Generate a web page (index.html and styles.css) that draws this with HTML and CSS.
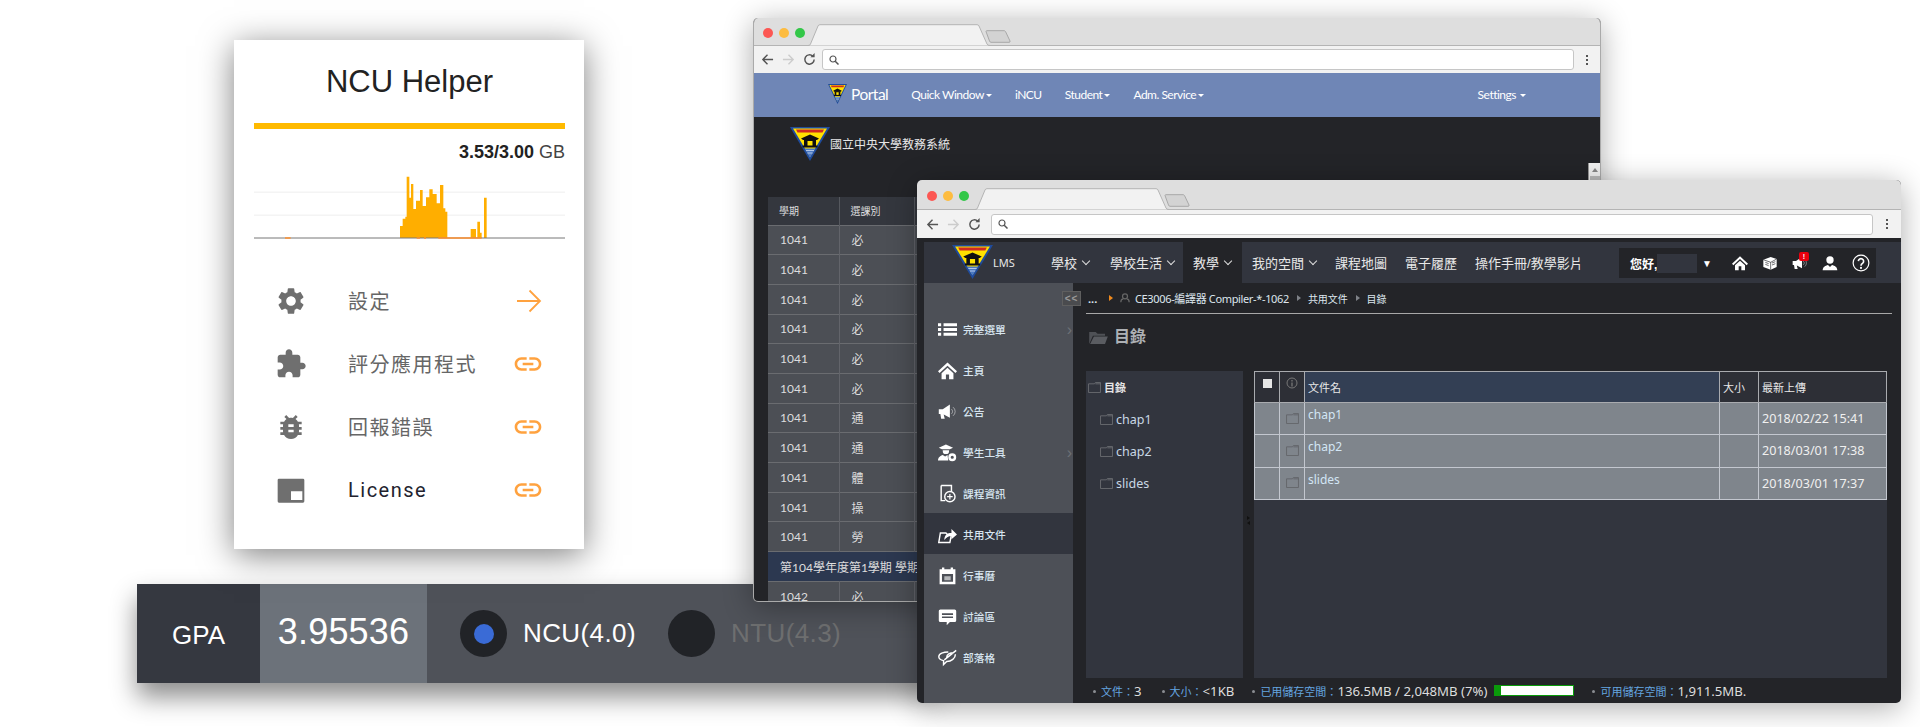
FILE: index.html
```html
<!DOCTYPE html>
<html lang="zh-Hant">
<head>
<meta charset="utf-8">
<title>NCU Helper</title>
<link rel="stylesheet" href="styles.css">
</head>
<body>
<svg class="defs" width="0" height="0" aria-hidden="true">
  <symbol id="ncu" viewBox="0 0 40 34" preserveAspectRatio="none">
    <polygon points="0,0 40,0 20,34" fill="#1f4b9c"/>
    <polygon points="3,1.500 37,1.500 20,30" fill="#ffe100"/>
    <polygon points="6,2.500 34,2.500 32.500,5.500 7.500,5.500" fill="#d02a22"/>
    <path d="M11 11.500 20 7.500 29 11.500 27 13H13Z" fill="#111"/>
    <path fill-rule="evenodd" d="M14 12.500h12V19h-12ZM17.500 14v5h5v-5Z" fill="#111"/>
    <rect x="12.500" y="18.500" width="15" height="2" fill="#111"/>
    <polygon points="14.500,21.500 25.500,21.500 20,30.500" fill="#4a78c4"/>
    <path d="M16 23.500h8M17.500 26h5" stroke="#dfe8f5" stroke-width=".7"/>
  </symbol>
  <symbol id="i-back" viewBox="0 0 14 14"><path d="M13 7H2M7 2 2 7l5 5" fill="none" stroke="currentColor" stroke-width="1.500"/></symbol>
  <symbol id="i-fwd" viewBox="0 0 14 14"><path d="M1 7h11M7 2l5 5-5 5" fill="none" stroke="currentColor" stroke-width="1.500"/></symbol>
  <symbol id="i-reload" viewBox="0 0 14 14"><path d="M12 7a5 5 0 1 1-1.500-3.600" fill="none" stroke="currentColor" stroke-width="1.600"/><path d="M8 4.500h4.500V0Z" fill="currentColor"/></symbol>
  <symbol id="i-search" viewBox="0 0 10 10"><circle cx="4" cy="4" r="3" fill="none" stroke="currentColor" stroke-width="1.200"/><path d="M6.200 6.200 9.500 9.500" stroke="currentColor" stroke-width="1.500"/></symbol>
  <symbol id="i-link" viewBox="0 0 24 24"><path d="M3.900 12c0-1.710 1.390-3.100 3.100-3.100h4V7H7c-2.760 0-5 2.240-5 5s2.240 5 5 5h4v-1.900H7c-1.710 0-3.100-1.390-3.100-3.100zM8 13h8v-2H8v2zm9-6h-4v1.900h4c1.710 0 3.100 1.390 3.100 3.100s-1.390 3.100-3.100 3.100h-4V17h4c2.760 0 5-2.240 5-5s-2.240-5-5-5z"/></symbol>
  <symbol id="i-folder" viewBox="0 0 14 12"><path d="M.5 11.500V2H7L8 .5h5.500v11Z M8 2h5.500" fill="none" stroke="currentColor"/></symbol>
  <symbol id="i-home" viewBox="0 0 24 24"><path d="M12 2 0 13l2 2.200L12 6l10 9.200 2-2.200Z M4.500 15.500V23H10v-6h4v6h5.500v-7.500L12 8.500Z"/></symbol>
  <symbol id="i-mega" viewBox="0 0 24 24"><path d="M1 9h5l9-6v17l-9-5H7l1.500 6H4l-1-6H1Z"/><path d="M17 9a4 4 0 0 1 0 6M19 6.500a7 7 0 0 1 0 11" fill="none" stroke="currentColor" stroke-opacity=".6"/></symbol>
</svg>

<section class="gpa">
  <div class="gpa-label">GPA</div>
  <div class="gpa-value">3.95536</div>
  <div class="gpa-opt"><span class="radio radio-on"></span><span>NCU(4.0)</span></div>
  <div class="gpa-opt gpa-off"><span class="radio"></span><span>NTU(4.3)</span></div>
</section>

<section class="card">
  <h1 class="card-title">NCU Helper</h1>
  <div class="quota-bar"></div>
  <div class="quota-text"><b>3.53/3.00</b> GB</div>
  <svg class="chart" viewBox="102 420 933 210" width="311" height="70">
    <path d="M102 486.500H1035M102 555.500H1035" stroke="#eee" stroke-width="3" fill="none"/>
    <path fill="#ffae00" d="M540 624V588h8v-22h8v58ZM556 624V560h4V440h8v63h5v-41h7v75h8v-25h12v-32h8v48h10v-26h10v-24h10v14h12v28h10v-55h10v70h6v10h6v79ZM752 624V597h16v27ZM772 624V575h8v33h5v16ZM792 624V503h8v121Z"/>
    <path d="M102 624H1035" stroke="#777" stroke-width="3"/>
    <path d="M195 624h17M590 624h10M612 624h6M655 624h130" stroke="#ff9130" stroke-width="4"/>
  </svg>
  <ul class="menu">
    <li class="menu-row">
      <svg class="mi" viewBox="0 0 24 24"><path d="M19.140 12.940c.040-.300.060-.610.060-.940 0-.320-.020-.640-.070-.940l2.030-1.580c.180-.140.230-.410.120-.610l-1.920-3.320c-.120-.220-.370-.290-.590-.220l-2.390.960c-.500-.380-1.030-.700-1.620-.940l-.360-2.540c-.040-.240-.240-.410-.480-.410h-3.840c-.240 0-.430.170-.470.410l-.360 2.540c-.590.240-1.130.570-1.620.940l-2.390-.960c-.220-.080-.470 0-.590.220L2.740 8.870c-.120.210-.080.470.120.610l2.030 1.580c-.050.300-.090.630-.090.940s.020.640.070.940l-2.030 1.580c-.180.140-.230.410-.120.610l1.920 3.320c.120.220.370.290.590.220l2.390-.960c.500.380 1.030.700 1.620.940l.360 2.540c.050.240.240.410.480.410h3.840c.240 0 .440-.170.470-.410l.360-2.540c.590-.240 1.130-.560 1.620-.940l2.390.960c.220.080.470 0 .590-.220l1.920-3.320c.120-.220.070-.470-.120-.610l-2.010-1.580zM12 15.600c-1.980 0-3.600-1.620-3.600-3.600s1.620-3.600 3.600-3.600 3.600 1.620 3.600 3.600-1.620 3.600-3.600 3.600z"/></svg>
      <span class="menu-text">設定</span>
      <svg class="ml" viewBox="0 0 32 32"><path d="M5 16H27M17.500 5.500 28 16 17.500 26.500" fill="none" stroke="currentColor" stroke-width="1.800"/></svg>
    </li>
    <li class="menu-row">
      <svg class="mi" viewBox="0 0 24 24"><path d="M20.500 11H19V7c0-1.100-.900-2-2-2h-4V3.500C13 2.120 11.880 1 10.500 1S8 2.120 8 3.500V5H4c-1.100 0-1.990.900-1.990 2v3.800H3.500c1.490 0 2.700 1.210 2.700 2.700s-1.210 2.700-2.700 2.700H2V20c0 1.100.900 2 2 2h3.800v-1.500c0-1.490 1.210-2.700 2.700-2.700 1.490 0 2.700 1.210 2.700 2.700V22H17c1.100 0 2-.900 2-2v-4h1.500c1.380 0 2.500-1.120 2.500-2.500S21.880 11 20.500 11z"/></svg>
      <span class="menu-text">評分應用程式</span>
      <svg class="ml"><use href="#i-link"/></svg>
    </li>
    <li class="menu-row">
      <svg class="mi" viewBox="0 0 24 24"><path d="M20 8h-2.810c-.450-.780-1.070-1.450-1.820-1.960L17 4.410 15.590 3l-2.170 2.170C12.960 5.060 12.490 5 12 5c-.490 0-.960.060-1.410.170L8.410 3 7 4.410l1.620 1.630C7.880 6.550 7.260 7.220 6.810 8H4v2h2.090c-.050.330-.090.660-.090 1v1H4v2h2v1c0 .340.040.670.090 1H4v2h2.810c1.040 1.790 2.970 3 5.190 3s4.150-1.210 5.190-3H20v-2h-2.090c.050-.330.090-.660.090-1v-1h2v-2h-2v-1c0-.340-.040-.670-.090-1H20V8zm-6 8h-4v-2h4v2zm0-4h-4v-2h4v2z"/></svg>
      <span class="menu-text">回報錯誤</span>
      <svg class="ml"><use href="#i-link"/></svg>
    </li>
    <li class="menu-row">
      <svg class="mi" viewBox="0 0 24 24"><path fill-rule="evenodd" d="M2 4.500A1 1 0 0 1 3 3.500H21A1 1 0 0 1 22 4.500V20.500A1 1 0 0 1 21 21.500H3A1 1 0 0 1 2 20.500ZM12 13V19.500H20.500V13Z"/></svg>
      <span class="menu-text menu-dark">License</span>
      <svg class="ml"><use href="#i-link"/></svg>
    </li>
  </ul>
</section>

<section class="window win-a">
  <div class="tabs">
    <div class="lights"><i class="red"></i><i class="amber"></i><i class="green"></i></div>
    <svg class="tab" viewBox="0 0 185 22" width="185" height="22"><path d="M0 21.500H3Q5 21.500 5.500 20L13 2Q13.500 .700 15 .700H172Q173.500 .700 174 2L182 20Q182.500 21.500 185 21.500" fill="#f2f2f2" stroke="#b4b4b4"/></svg>
    <svg class="tab-new" viewBox="0 0 26 13" width="26" height="13"><path d="M1 1.500Q1 .700 2 .700H19Q20 .700 20.500 1.500L25 11Q25.500 12.300 24 12.300H6Q5 12.300 4.500 11Z" fill="#d3d3d3" stroke="#a8a8a8"/></svg>
  </div>
  <div class="toolbar">
    <svg class="tb-i"><use href="#i-back"/></svg>
    <svg class="tb-i tb-dim"><use href="#i-fwd"/></svg>
    <svg class="tb-i"><use href="#i-reload"/></svg>
    <div class="urlbar"><svg class="tb-s"><use href="#i-search"/></svg></div>
    <div class="kebab"><i></i><i></i><i></i></div>
  </div>
  <nav class="portal-nav">
    <a class="brand"><svg class="brand-logo"><use href="#ncu"/></svg>Portal</a>
    <a class="caret">Quick Window</a>
    <a>iNCU</a>
    <a class="caret">Student</a>
    <a class="caret">Adm. Service</a>
    <a class="caret caret-gap settings">Settings</a>
  </nav>
  <div class="sis">
    <div class="sis-scroll"><i class="up"></i><i class="thumb"></i></div>
    <header class="sis-head"><svg class="sis-logo"><use href="#ncu"/></svg><span>國立中央大學教務系統</span></header>
    <table class="sis-table">
      <colgroup><col class="c1"><col class="c2"><col></colgroup>
      <thead><tr><th>學期</th><th>選課別</th><th></th></tr></thead>
      <tbody>
        <tr><td>1041</td><td>必</td><td></td></tr>
        <tr><td>1041</td><td>必</td><td></td></tr>
        <tr><td>1041</td><td>必</td><td></td></tr>
        <tr><td>1041</td><td>必</td><td></td></tr>
        <tr><td>1041</td><td>必</td><td></td></tr>
        <tr><td>1041</td><td>必</td><td></td></tr>
        <tr><td>1041</td><td>通</td><td></td></tr>
        <tr><td>1041</td><td>通</td><td></td></tr>
        <tr><td>1041</td><td>體</td><td></td></tr>
        <tr><td>1041</td><td>操</td><td></td></tr>
        <tr><td>1041</td><td>勞</td><td></td></tr>
        <tr class="sum"><td colspan="3">第104學年度第1學期 學期</td></tr>
        <tr class="last"><td>1042</td><td>必</td><td></td></tr>
      </tbody>
    </table>
  </div>
</section>

<section class="window win-b">
  <div class="tabs">
    <div class="lights"><i class="red"></i><i class="amber"></i><i class="green"></i></div>
    <svg class="tab" viewBox="0 0 197 22" width="197" height="22"><path d="M0 21.500H3Q5 21.500 5.500 20L13 2Q13.500 .700 15 .700H184Q185.500 .700 186 2L194 20Q194.500 21.500 197 21.500" fill="#f2f2f2" stroke="#b4b4b4"/></svg>
    <svg class="tab-new" viewBox="0 0 26 13" width="26" height="13"><path d="M1 1.500Q1 .700 2 .700H19Q20 .700 20.500 1.500L25 11Q25.500 12.300 24 12.300H6Q5 12.300 4.500 11Z" fill="#d3d3d3" stroke="#a8a8a8"/></svg>
  </div>
  <div class="toolbar">
    <svg class="tb-i"><use href="#i-back"/></svg>
    <svg class="tb-i tb-dim"><use href="#i-fwd"/></svg>
    <svg class="tb-i"><use href="#i-reload"/></svg>
    <div class="urlbar"><svg class="tb-s"><use href="#i-search"/></svg></div>
    <div class="kebab"><i></i><i></i><i></i></div>
  </div>
  <div class="lms">
    <nav class="lms-nav">
      <a class="lms-brand"><svg class="lms-logo"><use href="#ncu"/></svg><span>LMS</span></a>
      <a class="ln chev">學校</a>
      <a class="ln chev ln-tight">學校生活</a>
      <a class="ln chev ln-on">教學</a>
      <a class="ln chev ln-tight2">我的空間</a>
      <a class="ln ln-plain">課程地圖</a>
      <a class="ln ln-plain">電子履歷</a>
      <a class="ln ln-plain">操作手冊/教學影片</a>
      <div class="lms-user">
        <b class="hello">您好,</b><span class="uname"></span><span class="tri">▼</span>
        <svg class="ub ub-first" viewBox="0 0 24 24"><use href="#i-home"/></svg>
        <svg class="ub" viewBox="0 0 24 24"><path d="M2 7 13 3l9 3v12l-9 4-11-4Z"/><path d="M2 7l11 4 9-5M13 11v11M5 11l5 2M5 14l5 2M15 12l5-2M15 15l5-2" fill="none" stroke="#232428"/></svg>
        <span class="ub-wrap"><svg class="ub" viewBox="0 0 24 24"><use href="#i-mega"/></svg><em class="badge">!</em></span>
        <svg class="ub" viewBox="0 0 24 24"><circle cx="12" cy="7.500" r="5.500"/><path d="M1 23c0-5 4-7 8-8l3 3 3-3c4 1 8 3 8 8Z"/></svg>
        <svg class="ub ub-help" viewBox="0 0 24 24"><circle cx="12" cy="12" r="10.500" fill="none" stroke="currentColor" stroke-width="1.600"/><path d="M8.500 9.500a3.500 3.500 0 1 1 5.500 3c-1.500 1-2 1.500-2 3" fill="none" stroke="currentColor" stroke-width="2.200"/><circle cx="12" cy="18.500" r="1.400"/></svg>
      </div>
    </nav>
    <div class="lms-body">
      <aside class="side">
        <a class="si si-more"><svg class="si-i" viewBox="0 0 24 24"><path d="M0 4h4v4H0ZM7 4h17v4H7ZM0 10h4v4H0ZM7 10h17v4H7ZM0 16h4v4H0ZM7 16h17v4H7Z"/></svg>完整選單</a>
        <a class="si"><svg class="si-i" viewBox="0 0 24 24"><use href="#i-home"/></svg>主頁</a>
        <a class="si"><svg class="si-i" viewBox="0 0 24 24"><use href="#i-mega"/></svg>公告</a>
        <a class="si si-more"><svg class="si-i" viewBox="0 0 24 24"><path d="M1 6 10 2l9 4-4 2H5ZM6 9h8v1a4 4 0 0 1-8 0ZM0 22c0-4 3-6 6-7l3 2 3-2 1 7Z"/><circle cx="18" cy="18" r="3.500" fill="none" stroke="currentColor" stroke-width="3"/></svg>學生工具</a>
        <a class="si"><svg class="si-i" viewBox="0 0 24 24"><path d="M4 2h13v8M4 2v19h5" fill="none" stroke="currentColor" stroke-width="1.800"/><circle cx="15" cy="16" r="6.500" fill="none" stroke="currentColor" stroke-width="1.800"/><path d="M15 12.500v7M11.500 16h7" stroke="currentColor" stroke-width="1.500"/></svg>課程資訊</a>
        <a class="si si-on"><svg class="si-i" viewBox="0 0 24 24"><path d="M3 10h7l2 2h5l-2 10H1Z" fill="none" stroke="currentColor" stroke-width="1.800"/><path d="M8 19c0-6 3-9 9-9V5l7 7-7 6v-4c-4 0-6 2-9 5Z"/></svg>共用文件</a>
        <a class="si"><svg class="si-i" viewBox="0 0 24 24"><path fill-rule="evenodd" d="M2 4h3V2h3v2h8V2h3v2h3v19H2ZM5 10v10h14V10Z"/><path d="M8 13h8v5H8Z" fill-opacity=".6"/></svg>行事曆</a>
        <a class="si"><svg class="si-i" viewBox="0 0 24 24"><path fill-rule="evenodd" d="M3 3h18q2 0 2 2v12q0 2-2 2h-6l-4 4v-4H3q-2 0-2-2V5q0-2 2-2ZM5 8v2h14V8ZM5 12v2h14v-2Z"/></svg>討論區</a>
        <a class="si"><svg class="si-i" viewBox="0 0 24 24"><path d="M22 8C22 13 17 17 11 17L7 21V16C3 15 1 13 1 11 1 7 7 5 13 5M8 15 23 3M11 12c0-4 4-6 9-6" fill="none" stroke="currentColor" stroke-width="1.800"/></svg>部落格</a>
      </aside>
      <main class="main">
        <button class="collapse">&lt;&lt;</button>
        <div class="crumbs">
          <span class="dots">...</span>
          <i class="cr-arrow cr-hot"></i>
          <svg class="cr-user" viewBox="0 0 12 12"><circle cx="6" cy="4" r="3" fill="none" stroke="#666" stroke-width="1.500"/><path d="M1 11c0-3 2-4 3-4M11 11c0-3-2-4-3-4" fill="none" stroke="#666" stroke-width="1.500"/></svg>
          <span>CE3006-編譯器 Compiler-*-1062</span>
          <i class="cr-arrow"></i><span class="cr-cjk">共用文件</span>
          <i class="cr-arrow"></i><span class="cr-cjk">目錄</span>
        </div>
        <div class="page-title">
          <svg class="pt-i" viewBox="0 0 20 14"><path d="M0 14V1h7l2 2h8v2H4L0 14Z" fill="#4f5156"/><path d="M1 14 5 6h15l-3 8Z" fill="#5a5c61"/></svg>
          目錄
        </div>
        <div class="panels">
          <div class="tree">
            <div class="tr tr-root"><svg class="fo"><use href="#i-folder"/></svg><b>目錄</b></div>
            <div class="tr"><svg class="fo"><use href="#i-folder"/></svg>chap1</div>
            <div class="tr"><svg class="fo"><use href="#i-folder"/></svg>chap2</div>
            <div class="tr"><svg class="fo"><use href="#i-folder"/></svg>slides</div>
          </div>
          <div class="split"><i class="sp-r"></i><i class="sp-l"></i></div>
          <div class="files">
            <table class="ftable">
              <colgroup><col class="f1"><col class="f2"><col><col class="f4"><col class="f5"></colgroup>
              <thead>
                <tr>
                  <th class="ctr"><span class="chk"></span></th>
                  <th class="ctr"><svg class="info" viewBox="0 0 12 12"><circle cx="6" cy="6" r="5" fill="none" stroke="#777"/><path d="M6 3v1.500M6 5.500V9.500" stroke="#777" stroke-width="1.300"/></svg></th>
                  <th class="fname">文件名</th>
                  <th>大小</th>
                  <th>最新上傳</th>
                </tr>
              </thead>
              <tbody>
                <tr><td></td><td class="ctr"><svg class="fo fo-row"><use href="#i-folder"/></svg></td><td class="nm">chap1</td><td></td><td class="dt">2018/02/22 15:41</td></tr>
                <tr><td></td><td class="ctr"><svg class="fo fo-row"><use href="#i-folder"/></svg></td><td class="nm">chap2</td><td></td><td class="dt">2018/03/01 17:38</td></tr>
                <tr><td></td><td class="ctr"><svg class="fo fo-row"><use href="#i-folder"/></svg></td><td class="nm">slides</td><td></td><td class="dt">2018/03/01 17:37</td></tr>
              </tbody>
            </table>
          </div>
        </div>
        <div class="status">
          <span class="st st-a"><em>文件：</em>3</span>
          <span class="st st-b"><em>大小：</em>&lt;1KB</span>
          <span class="st st-c"><em>已用儲存空間：</em>136.5MB / 2,048MB (7%)</span>
          <span class="meter"><i class="meter-fill" style="width:7%"></i></span>
          <span class="st st-d"><em>可用儲存空間：</em>1,911.5MB.</span>
        </div>
      </main>
    </div>
  </div>
</section>
</body>
</html>
```

FILE: styles.css
```css
* { box-sizing: border-box; }
html, body { margin: 0; padding: 0; }
body {
  position: relative;
  width: 1920px;
  height: 727px;
  overflow: hidden;
  background: #fff;
  font-family: "Liberation Sans", "Noto Sans CJK TC", sans-serif;
}
.defs { position: absolute; }
a { color: inherit; text-decoration: none; }
i, em { font-style: normal; }

/* GPA bar */
.gpa {
  position: absolute;
  left: 137px;
  top: 584px;
  width: 800px;
  height: 99px;
  display: flex;
  align-items: center;
  background: #4f5259;
  color: #fff;
  box-shadow: 0 14px 24px rgba(0,0,0,.45);
}
.gpa-label {
  width: 123px;
  height: 100%;
  display: flex;
  align-items: center;
  justify-content: center;
  padding-top: 3px;
  background: #353840;
  font-size: 26px;
}
.gpa-value {
  width: 167px;
  height: 100%;
  display: flex;
  align-items: center;
  justify-content: center;
  padding-bottom: 4px;
  background: #6c727a;
  font-size: 36px;
  letter-spacing: .2px;
}
.gpa-opt {
  display: flex;
  align-items: center;
  gap: 16px;
  margin-left: 33px;
  font-size: 26px;
  letter-spacing: .4px;
}
.gpa-off { margin-left: 32px; color: #6e6f70; }
.radio {
  width: 47px;
  height: 47px;
  border-radius: 50%;
  background: #212327;
  display: flex;
  align-items: center;
  justify-content: center;
}
.radio-on::before {
  content: "";
  width: 20px;
  height: 20px;
  border-radius: 50%;
  background: #3a6bd6;
}

/* Card */
.card {
  position: absolute;
  left: 234px;
  top: 40px;
  width: 350px;
  height: 509px;
  padding: 0 19px 0 20px;
  background: #fff;
  box-shadow: 0 6px 32px rgba(0,0,0,.5);
  color: #222;
}
.card-title {
  margin: 22px 0 0;
  height: 61px;
  line-height: 40px;
  font-size: 31px;
  font-weight: 400;
  text-align: center;
}
.quota-bar { height: 6px; background: #ffba00; }
.quota-text {
  margin-top: 12px;
  height: 22px;
  line-height: 22px;
  font-size: 18px;
  text-align: right;
  color: #444;
}
.quota-text b { color: #222; }
.chart { display: block; margin-top: 7px; }
.menu { list-style: none; margin: 29px 0 0; padding: 0 0 0 21px; }
.menu-row {
  display: flex;
  align-items: center;
  height: 63px;
}
.mi { width: 32px; height: 32px; fill: #6f6f6f; flex: none; }
.menu-text {
  margin-left: 41px;
  font-family: Roboto, "Noto Sans CJK TC", sans-serif;
  font-size: 20px;
  letter-spacing: 1.5px;
  color: #666;
}
.menu-dark { color: #22222e; }
.ml { width: 32px; height: 32px; margin-left: auto; margin-right: 21px; fill: #ffa23f; color: #ffa23f; }

/* Browser windows */
.window {
  position: absolute;
  border-radius: 5px;
  overflow: hidden;
  box-shadow: 0 5px 30px rgba(0,0,0,.33);
}
.win-a { left: 753px; top: 18px; width: 848px; height: 584px; background: #232428; border: 1px solid #aaa; border-top: 0; }
.win-b { left: 917px; top: 180px; width: 984px; height: 523px; background: #232428; }
.tabs {
  display: flex;
  align-items: flex-end;
  background: #dedede;
  border-bottom: 1px solid #b4b4b4;
}
.win-a .tabs { height: 28px; }
.win-b .tabs { height: 30px; }
.lights { align-self: flex-start; display: flex; gap: 6px; }
.win-a .lights { padding: 10px 0 0 9px; }
.win-b .lights { padding: 11px 3px 0 10px; }
.lights i { display: block; width: 10px; height: 10px; border-radius: 50%; }
.red { background: #fc5753; }
.amber { background: #fdbc40; }
.green { background: #33c748; }
.tab { margin-bottom: -1px; flex: none; }
.tab-new { margin: 0 0 2px -5px; flex: none; }
.toolbar {
  display: flex;
  align-items: center;
  background: #f2f2f2;
}
.win-a .toolbar { height: 27px; padding-left: 7px; }
.win-b .toolbar { height: 28px; padding-left: 9px; }
.tb-i { width: 13px; height: 13px; color: #555; margin-right: 8px; flex: none; }
.tb-dim { color: #ccc; }
.urlbar {
  flex: 1;
  height: 21px;
  display: flex;
  align-items: center;
  padding-left: 6px;
  background: #fff;
  border: 1px solid #c6c6c6;
  border-radius: 3px;
}
.win-a .urlbar { margin-left: -2px; }
.win-b .urlbar { margin-left: 2px; }
.tb-s { width: 10px; height: 10px; color: #555; }
.kebab { width: 28px; display: flex; flex-direction: column; align-items: center; gap: 2px; }
.win-a .kebab { width: 26px; }
.kebab i { width: 2px; height: 2px; background: #555; }

/* Portal window */
.portal-nav {
  height: 44px;
  padding: 0 74px 2px 74px;
  display: flex;
  align-items: center;
  gap: 23px;
  background: #6f86b6;
  color: #fff;
  font-family: Lato, "Noto Sans CJK TC", sans-serif;
  font-size: 12px;
  letter-spacing: -.5px;
}
.brand { display: flex; align-items: center; gap: 4px; font-size: 15.500px; }
.brand-logo { width: 19px; height: 20px; }
.caret::after {
  content: "";
  display: inline-block;
  margin-left: 2px;
  vertical-align: middle;
  border-top: 3px solid #fff;
  border-left: 3.500px solid transparent;
  border-right: 3.500px solid transparent;
}
.caret-gap::after { margin-left: 4px; }
.settings { margin-left: auto; }
.sis { position: relative; height: 484px; overflow: hidden; color: #ddd; }
.sis-head {
  height: 80px;
  padding: 10px 0 0 36px;
  display: flex;
  align-items: flex-start;
  font-size: 12px;
  color: #e6e6e6;
}
.sis-head span { margin-top: 8px; }
.sis-logo { width: 40px; height: 34px; flex: none; }
.sis-scroll {
  position: absolute;
  right: 0;
  top: 46px;
  width: 12px;
  height: 60px;
  display: flex;
  flex-direction: column;
  align-items: center;
  background: #f1f1f1;
  border-left: 1px solid #999;
}
.up {
  margin-top: 5px;
  border-bottom: 4px solid #888;
  border-left: 3px solid transparent;
  border-right: 3px solid transparent;
}
.thumb { margin-top: 4px; width: 10px; height: 40px; background: #bbb; }
.sis-table {
  margin-left: 14px;
  width: 820px;
  table-layout: fixed;
  border-collapse: collapse;
  font-family: Lato, "Noto Sans CJK TC", sans-serif;
  font-size: 12px;
}
.c1 { width: 71px; }
.c2 { width: 75px; }
.sis-table th {
  height: 28px;
  padding: 0 0 0 11px;
  background: #34373e;
  border-right: 1px solid #55585e;
  font-size: 10px;
  font-weight: 400;
  text-align: left;
}
.sis-table td {
  height: 29.700px;
  padding: 0 0 0 12px;
  background: #4c4f55;
  border-top: 1px solid #6a6c70;
  border-right: 1px solid #62646a;
}
.sis-table .sum td { background: #2c3850; border-right: 0; height: 29.500px; white-space: nowrap; }

/* LMS window */
.lms { height: 465px; padding-top: 4px; }
.lms-nav {
  margin-left: 7px;
  height: 41px;
  display: flex;
  align-items: stretch;
  background: #32353e;
  color: #e8e8e8;
  font-size: 13px;
}
.lms-brand { width: 117px; padding: 3px 0 0 28px; display: flex; align-items: flex-start; }
.lms-logo { width: 41px; height: 34px; flex: none; }
.lms-brand span { margin-top: 10px; font-family: "Noto Sans", sans-serif; font-size: 11px; }
.ln { display: flex; align-items: center; padding: 0 10px; }
.ln-plain { padding: 0 9px; }
.ln-tight { padding-right: 8px; }
.ln-tight2 { padding-right: 9px; }
.ln-on { background: #232428; }
.chev::after {
  content: "";
  width: 5px;
  height: 5px;
  margin: 0 1px 3px 6px;
  border-right: 1.500px solid #ddd;
  border-bottom: 1.500px solid #ddd;
  transform: rotate(45deg);
}
.lms-user {
  margin: 6px 25px 5px auto;
  width: 257px;
  display: flex;
  align-items: center;
  background: #232428;
  color: #fff;
  font-size: 12px;
}
.hello { margin-left: 11px; width: 27px; white-space: nowrap; }
.uname { width: 40px; height: 19px; background: #32353e; }
.tri { margin-left: 5px; width: 12px; font-size: 10px; }
.ub { width: 16px; height: 16px; margin-right: 14px; fill: #fff; color: #fff; flex: none; }
.ub-first { margin-left: 18px; }
.ub-help { width: 18px; height: 18px; margin-right: 0; }
.ub-wrap { position: relative; display: flex; }
.badge {
  position: absolute;
  left: 7px;
  top: -3px;
  width: 10px;
  height: 9px;
  border-radius: 2px;
  background: #e8000e;
  color: #fff;
  font-size: 7px;
  font-weight: 700;
  line-height: 9px;
  text-align: center;
}
.lms-body { display: flex; height: 420px; margin-left: 7px; }
.side {
  width: 149px;
  flex: none;
  padding-top: 25px;
  background: #4d5057;
  color: #d7e5f0;
  font-size: 10.700px;
  font-weight: 500;
}
.si {
  height: 41px;
  display: flex;
  align-items: center;
  gap: 6px;
  padding: 2px 0 0 14px;
}
.si-more::after { content: "›"; margin-left: auto; margin-right: 1px; color: #6d7076; font-size: 16px; font-weight: 400; }
.si-on { background: #32353e; }
.si-i { width: 19px; height: 19px; fill: #fff; color: #fff; flex: none; }
.main { position: relative; flex: 1; min-width: 0; color: #ddd; }
.collapse {
  position: absolute;
  left: -11px;
  top: 8px;
  width: 19px;
  height: 15px;
  padding: 0;
  background: #4a4b4e;
  border: 1px solid #5f5f5f;
  color: #999;
  font: 700 10px/11px "Liberation Sans", sans-serif;
  letter-spacing: 1px;
}
.crumbs {
  margin: 0 9px 0 13px;
  height: 31px;
  display: flex;
  align-items: center;
  border-bottom: 1px solid #a8a8a8;
  font-family: "Noto Sans", "Noto Sans CJK TC", sans-serif;
  font-size: 11px;
  letter-spacing: -.35px;
  color: #dde6ee;
}
.cr-cjk { font-size: 10px; letter-spacing: -.1px; }
.dots { margin-left: 2px; width: 10px; font-weight: 700; letter-spacing: 0; }
.cr-arrow {
  width: 0;
  height: 0;
  margin: 0 7px 0 8px;
  border-left: 4px solid #7f8288;
  border-top: 3px solid transparent;
  border-bottom: 3px solid transparent;
}
.cr-hot { margin: 0 0 0 11px; border-left-color: #f08a1d; }
.cr-user { width: 10px; height: 10px; margin: 0 5px 0 7px; flex: none; }
.page-title {
  height: 57px;
  padding: 9px 0 0 16px;
  display: flex;
  align-items: flex-start;
  gap: 6px;
  font-size: 16px;
  font-weight: 700;
  color: #adb0b4;
}
.pt-i { width: 19px; height: 13px; margin-top: 8px; }
.panels { display: flex; height: 307px; margin: 0 14px 0 13px; }
.tree { width: 157px; flex: none; background: #32353e; color: #c9d8e5; font-family: "Noto Sans", "Noto Sans CJK TC", sans-serif; font-size: 12.500px; }
.tr { height: 32px; display: flex; align-items: center; gap: 3px; padding-left: 14px; }
.tr-root { padding-left: 2px; color: #e6e6e6; font-size: 11px; }
.fo { width: 13px; height: 11px; color: #6a6c71; flex: none; }
.split { width: 11px; flex: none; display: flex; flex-direction: column; align-items: center; justify-content: center; gap: 1px; padding-bottom: 8px; }
.sp-r { border-left: 3px solid #111; border-top: 2px solid transparent; border-bottom: 2px solid transparent; }
.sp-l { border-right: 3px solid #111; border-top: 2px solid transparent; border-bottom: 2px solid transparent; }
.files { flex: 1; background: #32353e; }
.ftable { width: 633px; table-layout: fixed; border-collapse: collapse; }
.f1, .f2 { width: 25px; }
.f4 { width: 39px; }
.f5 { width: 128px; }
.ftable th {
  height: 31px;
  padding: 0 0 0 3px;
  background: #2d2f36;
  border: 1px solid #a9abaf;
  font-size: 11px;
  font-weight: 400;
  text-align: left;
  color: #e8e8e8;
}
.ftable th.fname { background: #333f54; }
.ftable th.ctr, .ftable td.ctr { padding: 0; text-align: center; }
.chk { display: inline-block; width: 9px; height: 9px; margin-bottom: 6px; background: #e6e6e6; }
.info { width: 12px; height: 12px; margin-bottom: 6px; }
.ftable td {
  height: 32.300px;
  padding: 0 0 0 3px;
  background: #7f858c;
  border: 1px solid #c3c7cf;
  font-family: "Noto Sans", sans-serif;
  font-size: 12px;
}
.fo-row { color: #62656a; margin-top: 3px; }
.nm { color: #d3e6f5; vertical-align: top; padding-top: 3px !important; line-height: 18px; }
.ftable td.dt { color: #f0f0f0; font-size: 12.600px; white-space: nowrap; }
.status {
  height: 25px;
  display: flex;
  align-items: center;
  font-family: "Noto Sans", "Noto Sans CJK TC", sans-serif;
  font-size: 13.200px;
  color: #ddd;
  white-space: nowrap;
}
.st::before { content: ""; width: 3px; height: 3px; margin-right: 5px; display: inline-block; vertical-align: middle; background: #8a8d92; border-radius: 50%; }
.st em { color: #65a6e0; font-size: 11px; }
.st-a { margin-left: 20px; }
.st-b { margin-left: 20px; }
.st-c { margin-left: 18px; }
.st-d { margin-left: 18px; }
.meter {
  width: 80px;
  height: 11px;
  margin-left: 7px;
  display: flex;
  background: #fff;
  border: 1px solid #0a9a0a;
}
.meter-fill { background: #0a9a0a; }
```
